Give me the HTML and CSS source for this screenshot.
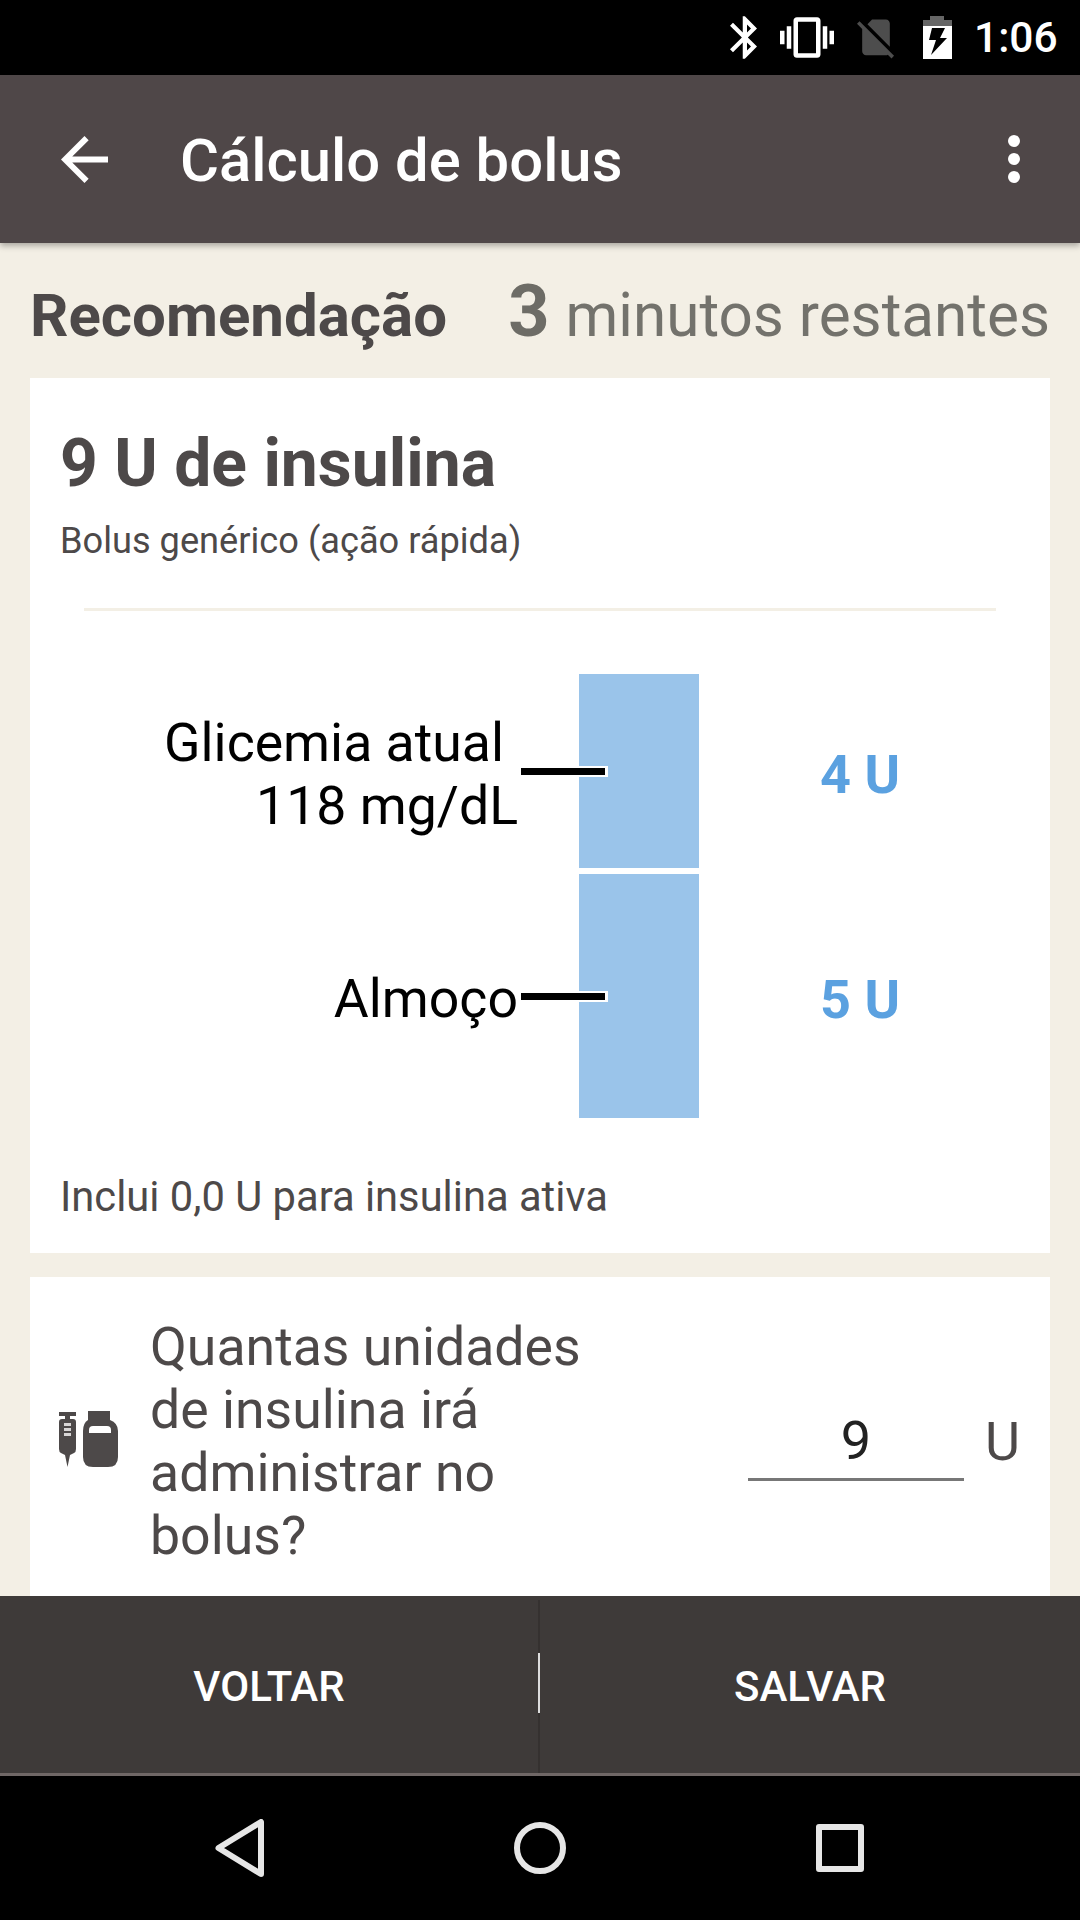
FILE: index.html
```html
<!DOCTYPE html>
<html lang="pt-BR">
<head>
    <meta charset="UTF-8">
    <meta name="viewport" content="width=device-width, initial-scale=1.0">
    <title>Cálculo de bolus</title>
    <link rel="stylesheet" href="styles.css">
</head>
<body>
    <div class="status-bar">
        <svg class="icon-bluetooth" viewBox="5 2 12.71 20"><path fill="#fff" d="M17.71 7.71L12 2h-1v7.59L6.41 5 5 6.41 10.59 12 5 17.59 6.41 19 11 14.41V22h1l5.71-5.71-4.3-4.29 4.3-4.29zM13 5.83l1.88 1.88L13 9.59V5.83zm1.88 10.46L13 18.17v-3.76l1.88 1.88z"/></svg>
        <svg class="icon-vibrate" viewBox="0 3 24 18"><path fill="#fff" d="M0 15h2V9H0v6zm3 2h2V7H3v10zm19-8v6h2V9h-2zm-3 8h2V7h-2v10zM16.5 3h-9C6.67 3 6 3.67 6 4.5v15c0 .83.67 1.5 1.5 1.5h9c.83 0 1.5-.67 1.5-1.5v-15c0-.83-.67-1.5-1.5-1.5zM16 19H8V5h8v14z"/></svg>
        <svg class="icon-sim" viewBox="2.38 3 19.74 19.62"><path fill="#4d4d4d" d="M18.99 5c0-1.1-.89-2-1.99-2h-7L7.66 5.34 19 16.68 18.99 5zM3.65 3.88L2.38 5.15 5 7.77V19c0 1.1.9 2 2 2h10.01c.35 0 .67-.1.96-.26l1.88 1.88 1.27-1.27L3.65 3.88z"/></svg>
        <svg class="icon-battery" viewBox="0 0 29 44">
            <path fill="#666" d="M7 0h14v4h8v7H0V4h7z"/>
            <path fill="#fff" d="M0 10h29v33H0z"/>
            <path fill="#000" d="M9 12h13l-5 10h7L8 39l5-15H6z"/>
        </svg>
        <span class="clock">1:06</span>
    </div>

    <div class="app-bar">
        <svg class="icon-back" viewBox="4 4 16 16"><path fill="#fff" d="M20 11H7.830l5.590-5.590L12 4l-8 8 8 8 1.410-1.410L7.830 13H20v-2z"/></svg>
        <h1>Cálculo de bolus</h1>
        <div class="menu-dots"><span></span><span></span><span></span></div>
    </div>

    <div class="content">
        <div class="heading-row">
            <h2>Recomendação</h2>
            <p class="time-left"><b>3</b> minutos restantes</p>
        </div>

        <div class="card dose-card">
            <h3>9 U de insulina</h3>
            <p class="dose-type">Bolus genérico (ação rápida)</p>
            <hr>
            <div class="chart">
                <div class="chart-row row-glucose">
                    <div class="chart-label"><span class="first-line">Glicemia atual</span><br>118 mg/dL</div>
                    <div class="chart-bar"><i class="leader"></i></div>
                    <div class="chart-value">4 U</div>
                </div>
                <div class="chart-row row-meal">
                    <div class="chart-label">Almoço</div>
                    <div class="chart-bar"><i class="leader"></i></div>
                    <div class="chart-value">5 U</div>
                </div>
            </div>
            <p class="active-note">Inclui 0,0 U para insulina ativa</p>
        </div>

        <div class="card units-card">
            <svg class="icon-insulin" viewBox="0 0 59 56">
                <path fill="#4d4949" d="M0 1h17v4h-6v3h3q3 0 3 3v27q0 3-2 4l-4 2-2.500 12-2.500-12-4-2q-2-1-2-4V11q0-3 3-3h3V5H0z"/>
                <path fill="#d8d6d6" d="M5 12h7v3H5zM5 17h7v3H5zM5 22h7v3H5z"/>
                <path fill="#4d4949" d="M29 0h22v9q8 3 8 11v26q0 10-10 10H34q-10 0-10-10V20q0-8 5-11z"/>
                <path fill="#fff" d="M30 19q0-4 4-4h14q4 0 4 4v3H30z"/>
            </svg>
            <p class="units-question">Quantas unidades de insulina irá administrar no bolus?</p>
            <div class="units-field">9</div>
            <span class="units-suffix">U</span>
        </div>
    </div>

    <div class="action-bar">
        <button type="button">VOLTAR</button>
        <div class="action-divider"></div>
        <button type="button">SALVAR</button>
    </div>

    <div class="nav-bar">
        <svg class="nav-back" viewBox="0 0 50 58"><path fill="none" stroke="#e6e6e6" stroke-width="6" stroke-linejoin="round" d="M46 3v52L3.500 29z"/></svg>
        <div class="nav-home"></div>
        <div class="nav-recent"></div>
    </div>
</body>
</html>
```

FILE: styles.css
```css
* {
    box-sizing: border-box;
}

body {
    font-family: 'Roboto', 'Liberation Sans', sans-serif;
    margin: 0;
    width: 1080px;
    height: 1920px;
    display: flex;
    flex-direction: column;
    overflow: hidden;
    background-color: #f3efe5;
    color: #4d4949;
}

/* status bar */
.status-bar {
    height: 75px;
    flex: none;
    background: #000;
    color: #fff;
    display: flex;
    align-items: center;
}

.status-bar svg {
    display: block;
    flex: none;
}

.icon-bluetooth {
    width: 27px;
    height: 43px;
    margin-left: 730px;
}

.icon-vibrate {
    width: 54px;
    height: 41px;
    margin-left: 23px;
}

.icon-sim {
    width: 39px;
    height: 42px;
    margin: 3px 0 0 23px;
}

.icon-battery {
    width: 29px;
    height: 44px;
    margin-left: 27px;
}

.clock {
    font-size: 42.5px;
    font-weight: 500;
    margin-left: 22px;
}

/* app bar */
.app-bar {
    height: 168px;
    flex: none;
    background: #4f4748;
    color: #fff;
    display: flex;
    align-items: center;
    position: relative;
    z-index: 2;
    padding: 0 36px 0 61px;
    box-shadow: 0 3px 6px rgba(0, 0, 0, 0.3);
}

.icon-back {
    width: 47px;
    height: 47px;
    flex: none;
}

.app-bar h1 {
    font-size: 59.8px;
    font-weight: 500;
    margin: 4px 0 0 72px;
    flex: 1;
}

.menu-dots {
    display: flex;
    flex-direction: column;
    gap: 6px;
    margin-right: 24px;
}

.menu-dots span {
    width: 12px;
    height: 12px;
    border-radius: 50%;
    background: #fff;
}

/* main content */
.content {
    flex: 1;
    min-height: 0;
    overflow: hidden;
    padding: 0 30px;
}

.heading-row {
    height: 135px;
    padding-top: 26px;
    display: flex;
    align-items: baseline;
    justify-content: space-between;
}

.heading-row h2 {
    font-size: 60px;
    font-weight: 700;
    margin: 0;
}

.time-left {
    font-size: 60.2px;
    margin: 0;
    color: #73726c;
}

.time-left b {
    font-size: 72px;
    margin-right: 1px;
    color: #6d6c66;
}

.card {
    background: #fff;
}

.dose-card {
    height: 875px;
    padding: 47px 30px 0;
    margin-bottom: 24px;
}

.dose-card h3 {
    font-size: 66px;
    font-weight: 700;
    margin: 0;
    line-height: 78px;
}

.dose-type {
    font-size: 36.2px;
    margin: 17px 0 0;
    line-height: 42px;
}

.dose-card hr {
    border: none;
    border-top: 3px solid #f3efe5;
    margin: 46px 24px 0;
}

.chart {
    margin-top: 63px;
}

.chart-row {
    display: flex;
    align-items: center;
}

.row-glucose {
    height: 194px;
    margin-bottom: 6px;
}

.row-meal {
    height: 244px;
}

.chart-label {
    width: 458px;
    padding-top: 5px;
    font-size: 53.6px;
    line-height: 63px;
    color: #000;
    text-align: right;
}

.first-line {
    margin-right: 14px;
}

.chart-bar {
    width: 120px;
    height: 100%;
    margin-left: 61px;
    background: #9ac4ea;
    position: relative;
}

.leader {
    position: absolute;
    left: -58px;
    top: 50%;
    width: 87px;
    height: 11px;
    margin-top: -5px;
    background: #000;
    border: solid #fff;
    border-width: 2px 3px 2px 0;
}

.chart-value {
    margin-left: 121px;
    padding-top: 7px;
    font-size: 54px;
    font-weight: 700;
    color: #5ba1e0;
}

.active-note {
    font-size: 41.7px;
    line-height: 46px;
    margin: 56px 0 0;
}

.units-card {
    height: 400px;
    display: flex;
    align-items: flex-start;
    padding: 38px 0 0 29px;
}

.icon-insulin {
    width: 59px;
    height: 56px;
    flex: none;
    margin-top: 96px;
}

.units-question {
    width: 470px;
    font-size: 53.6px;
    line-height: 63px;
    margin: 0 0 0 32px;
}

.units-field {
    width: 216px;
    height: 116px;
    margin: 50px 0 0 128px;
    font-size: 54px;
    line-height: 151px;
    text-align: center;
    color: #222;
    border-bottom: 3px solid #777;
}

.units-suffix {
    font-size: 54px;
    margin: 95px 0 0 21px;
}

/* bottom actions */
.action-bar {
    height: 180px;
    flex: none;
    background: #3e3a39;
    border-bottom: 3px solid #6f6766;
    display: flex;
}

.action-bar button {
    background: none;
    border: none;
    color: #fff;
    font-family: inherit;
    font-size: 42px;
    font-weight: 500;
    padding: 4px 0 0;
}

.action-bar button:first-child {
    width: 538px;
}

.action-bar button:last-child {
    width: 540px;
}

.action-divider {
    width: 2px;
    margin-top: 4px;
    background: #353130;
    position: relative;
}

.action-divider::after {
    content: "";
    position: absolute;
    left: 0;
    top: 53px;
    height: 60px;
    width: 2px;
    background: #ddd;
}

/* android nav */
.nav-bar {
    height: 144px;
    flex: none;
    background: #000;
    display: grid;
    grid-template-columns: repeat(3, 300px);
    justify-content: center;
    align-items: center;
    justify-items: center;
}

.nav-back {
    width: 50px;
    height: 58px;
}

.nav-home {
    width: 52px;
    height: 52px;
    border: 6px solid #e6e6e6;
    border-radius: 50%;
}

.nav-recent {
    width: 48px;
    height: 48px;
    border: 6px solid #e6e6e6;
    border-radius: 3px;
}
```
